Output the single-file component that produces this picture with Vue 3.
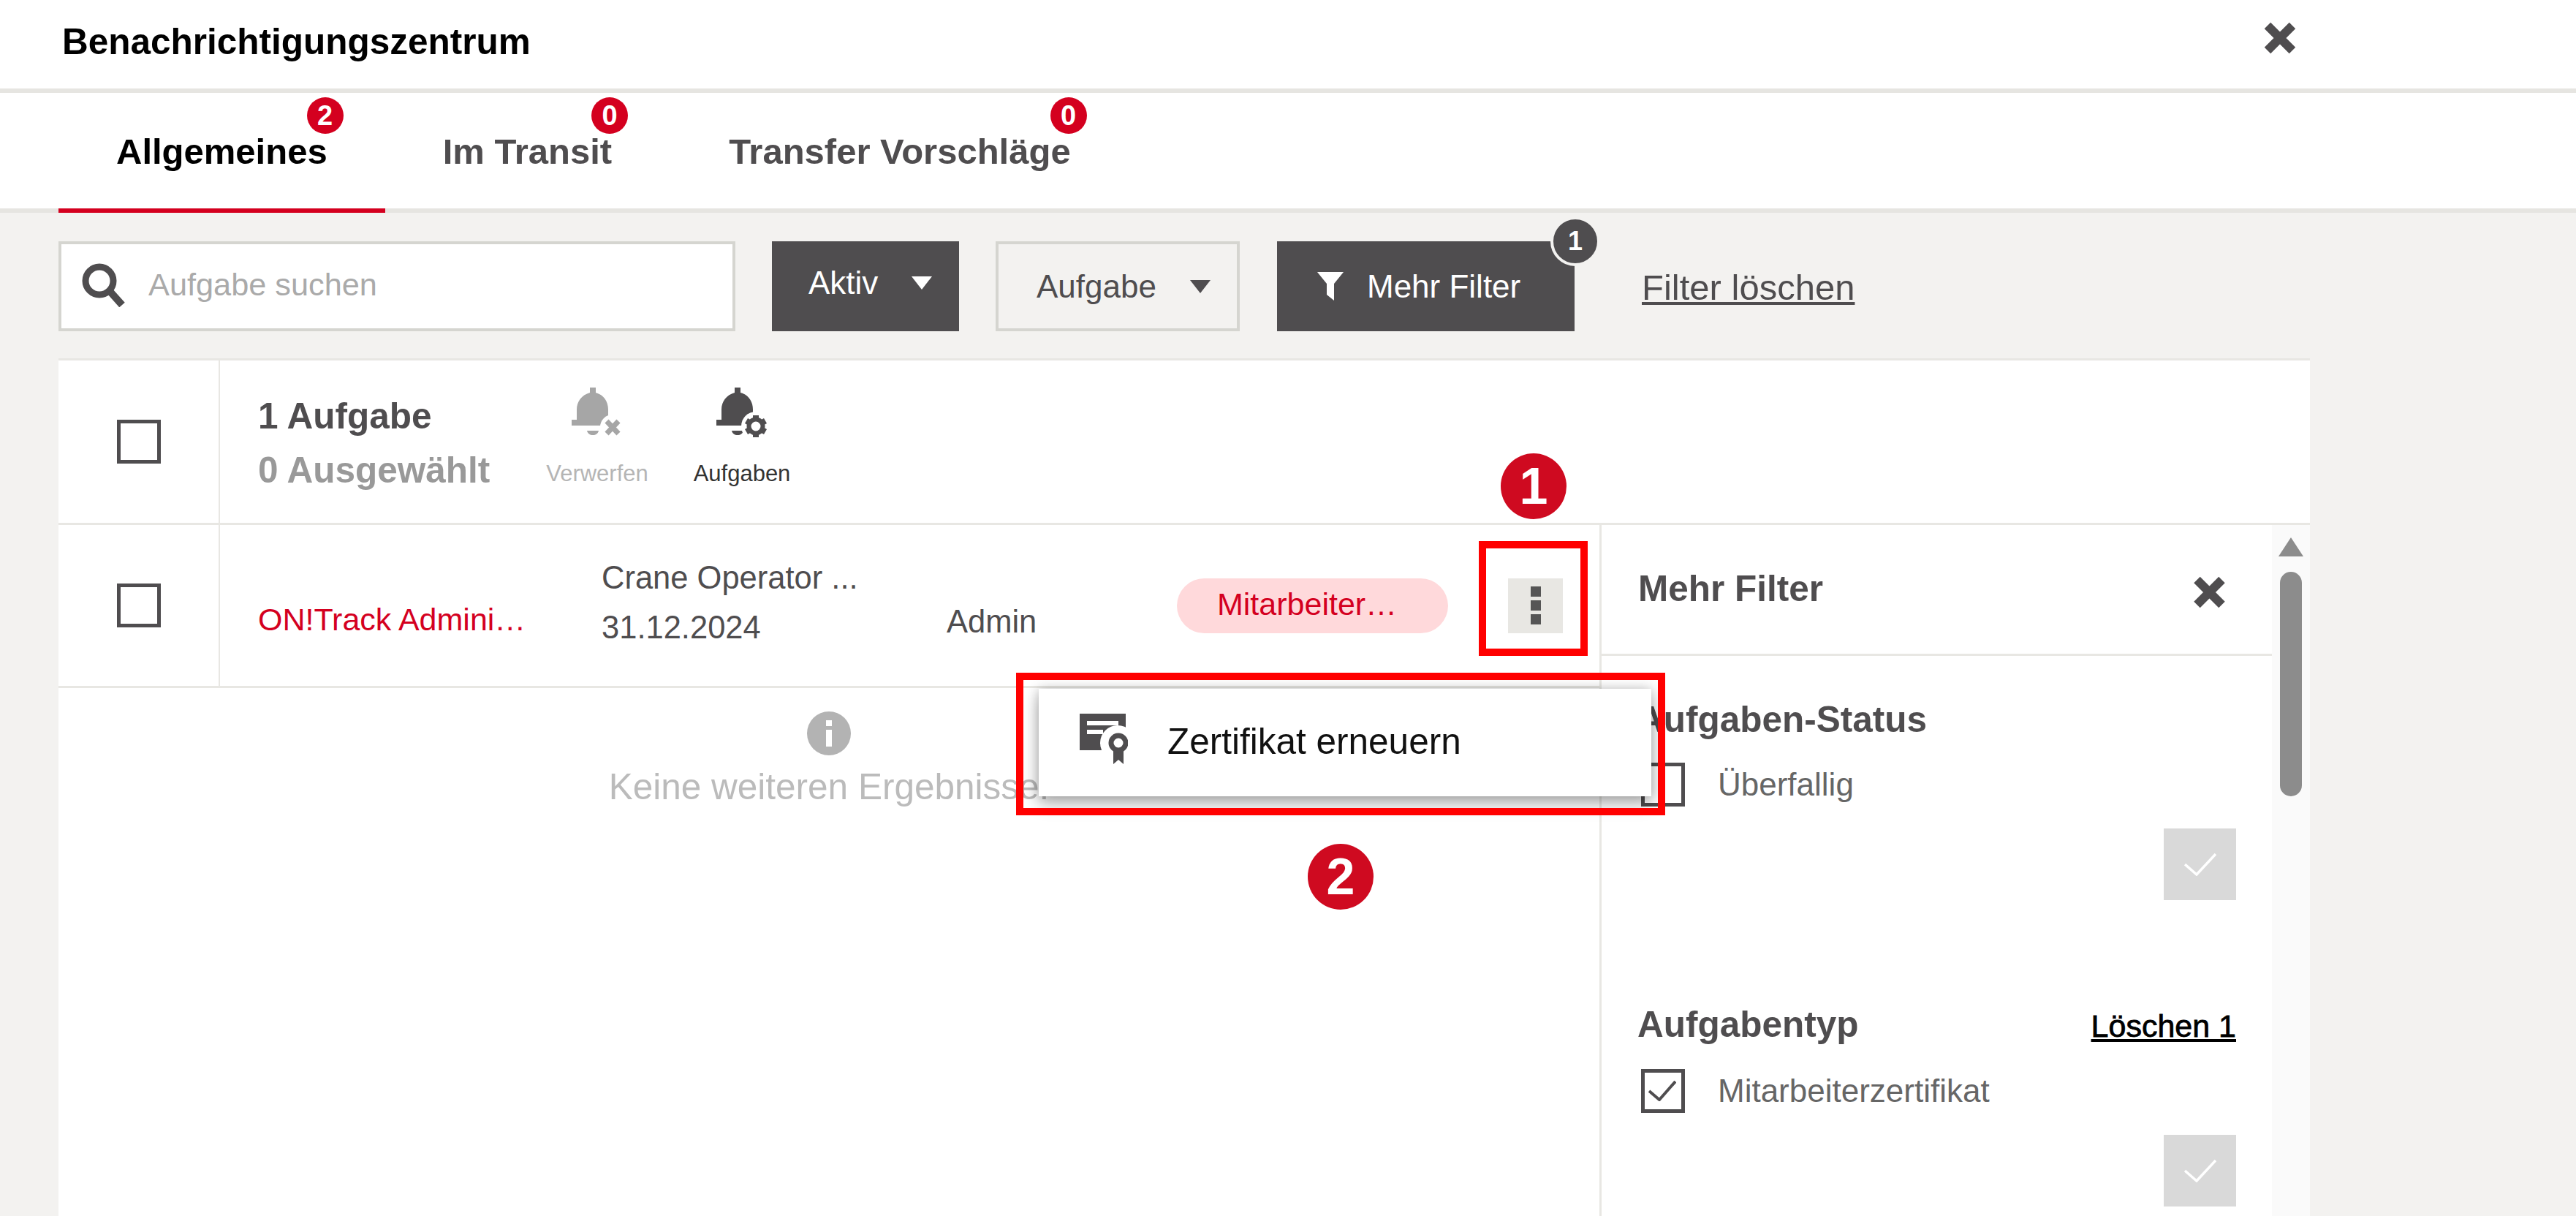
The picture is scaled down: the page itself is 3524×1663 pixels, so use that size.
<template>
  <div class="page">
    <!-- Titel -->
    <header class="titlebar">
      <span class="title">Benachrichtigungszentrum</span>
      <svg class="close-top" viewBox="0 0 44 44"><path d="M5 5l34 34M39 5L5 39" /></svg>
    </header>

    <!-- Tabs -->
    <nav class="tabs">
      <div v-for="tab in tabs" :key="tab.label" class="tab" :class="{ active: tab.active }">
        <span class="tab-label">
          {{ tab.label }}
          <span class="tab-badge">{{ tab.count }}</span>
        </span>
      </div>
    </nav>

    <!-- Filterleiste -->
    <section class="toolbar">
      <div class="search">
        <svg class="search-icon" viewBox="0 0 60 60">
          <circle cx="24" cy="24" r="19" />
          <path d="M38 38l17 19" />
        </svg>
        <span class="placeholder">Aufgabe suchen</span>
      </div>
      <button class="btn dark aktiv">
        Aktiv
        <svg class="caret" viewBox="0 0 28 18"><path d="M0 0h28L14 18z" /></svg>
      </button>
      <button class="btn outline aufgabe">
        Aufgabe
        <svg class="caret" viewBox="0 0 28 18"><path d="M0 0h28L14 18z" /></svg>
      </button>
      <button class="btn dark mehr">
        <svg class="funnel" viewBox="0 0 36 39"><path d="M0 0h36L23 16v23l-10-8V16z" /></svg>
        Mehr Filter
        <span class="more-badge">1</span>
      </button>
      <a class="clear-link">Filter löschen</a>
    </section>

    <!-- Liste -->
    <main class="card">
      <div class="list-head">
        <div class="check-cell"><span class="box"></span></div>
        <div class="count">
          <div class="count-total">1 Aufgabe</div>
          <div class="count-selected">0 Ausgewählt</div>
        </div>
        <div class="head-action muted">
          <svg viewBox="0 0 70 68" width="70" height="68">
            <g fill="#a6a6a6">
              <path d="M25 0h8v7c11 3 17 12 17 23v15H7V30C7 19 14 10 25 7z" />
              <path d="M0 44h48v8H0z" />
              <path d="M21 59h16c-1 4-4 6-8 6s-7-2-8-6z" />
            </g>
            <circle cx="56" cy="54" r="17" fill="#fff" />
            <path d="M48 46l16 17M64 46L48 63" stroke="#a6a6a6" stroke-width="7" fill="none" />
          </svg>
          <span>Verwerfen</span>
        </div>
        <div class="head-action">
          <svg viewBox="0 0 70 68" width="70" height="68">
            <g fill="#4f4d4f">
              <path d="M25 0h8v7c11 3 17 12 17 23v15H7V30C7 19 14 10 25 7z" />
              <path d="M0 44h48v8H0z" />
              <path d="M21 59h16c-1 4-4 6-8 6s-7-2-8-6z" />
            </g>
            <circle cx="54" cy="53" r="20" fill="#fff" />
            <g fill="#4f4d4f">
              <rect v-for="a in [0, 60, 120]" :key="a" x="50" y="38" width="8" height="30" :transform="`rotate(${a} 54 53)`" />
            </g>
            <circle cx="54" cy="53" r="9.5" fill="#fff" stroke="#4f4d4f" stroke-width="6" />
          </svg>
          <span>Aufgaben</span>
        </div>
      </div>

      <div class="body">
        <div class="results">
          <div class="row">
            <div class="check-cell"><span class="box"></span></div>
            <div class="cell name">ON!Track Admini…</div>
            <div class="cell asset">
              <div>Crane Operator ...</div>
              <div>31.12.2024</div>
            </div>
            <div class="cell owner">Admin</div>
            <div class="cell type"><span class="pill">Mitarbeiter…</span></div>
            <div class="kebab"><i></i><i></i><i></i></div>
          </div>
          <div class="empty">
            <svg class="info" viewBox="0 0 60 60">
              <circle cx="30" cy="30" r="30" fill="#b3b3b3" />
              <rect x="26" y="12" width="8" height="8" fill="#fff" />
              <rect x="26" y="25" width="8" height="23" fill="#fff" />
            </svg>
            <div class="empty-text">Keine weiteren Ergebnisse.</div>
          </div>
        </div>

        <aside class="filters">
          <div class="filters-main">
            <div class="filters-head">
              <span>Mehr Filter</span>
              <svg class="close-panel" viewBox="0 0 44 44"><path d="M5 5l34 34M39 5L5 39" /></svg>
            </div>
            <div v-for="group in filterGroups" :key="group.title" class="group">
              <div class="group-head">
                <span class="group-title">{{ group.title }}</span>
                <a v-if="group.clear" class="group-clear">{{ group.clear }}</a>
              </div>
              <div class="option">
                <span class="box small">
                  <svg v-if="group.checked" viewBox="0 0 38 28"><path d="M1 14l14 12L37 1" /></svg>
                </span>
                <span class="option-label">{{ group.option }}</span>
              </div>
              <div class="apply">
                <svg viewBox="0 0 44 31"><path d="M1 15l16 14L43 1" /></svg>
              </div>
            </div>
          </div>
          <div class="scrollbar">
            <svg class="scroll-arrow" viewBox="0 0 34 26"><path d="M17 0l17 26H0z" /></svg>
            <div class="scroll-thumb"></div>
          </div>
        </aside>
      </div>
    </main>

    <!-- Kontextmenü -->
    <div class="menu">
      <svg class="cert" viewBox="0 0 66 69">
        <path d="M0 0h63v50H0z" fill="#4f4d4f" />
        <path d="M10 10h43v6H10zM10 22h22v6H10z" fill="#fff" />
        <circle cx="52" cy="40" r="24" fill="#fff" />
        <path d="M46 48v21l7-6 7 6V48z" fill="#4f4d4f" />
        <circle cx="53" cy="40" r="10" fill="#fff" stroke="#4f4d4f" stroke-width="7" />
      </svg>
      <span>Zertifikat erneuern</span>
    </div>

    <!-- Markierungen -->
    <div class="mark box-one"></div>
    <div class="mark box-two"></div>
    <div class="step step-one">1</div>
    <div class="step step-two">2</div>
  </div>
</template>

<script setup>
const tabs = [
  { label: 'Allgemeines', count: 2, active: true },
  { label: 'Im Transit', count: 0 },
  { label: 'Transfer Vorschläge', count: 0 },
]

const filterGroups = [
  { title: 'Aufgaben-Status', option: 'Überfallig', checked: false },
  { title: 'Aufgabentyp', option: 'Mitarbeiterzertifikat', checked: true, clear: 'Löschen 1' },
]
</script>

<style>
html,
body {
  margin: 0;
  background: #fff;
}
</style>

<style scoped>
.page {
  position: relative;
  width: 3524px;
  height: 1663px;
  overflow: hidden;
  display: flex;
  flex-direction: column;
  background: #f3f2f0;
  color: #4f4d4f;
  font-family: "Liberation Sans", Arial, sans-serif;
}

.titlebar {
  flex: none;
  height: 121px;
  box-sizing: content-box;
  border-bottom: 6px solid #e6e5e1;
  background: #fff;
  display: flex;
  align-items: center;
  justify-content: space-between;
  padding: 0 383px 0 85px;
}

.title {
  font-size: 49.5px;
  font-weight: 700;
  color: #000;
  margin-top: -9px;
}

.close-top {
  width: 44px;
  height: 44px;
  margin-top: -18px;
}

.close-top path,
.close-panel path {
  stroke: #4f4d4f;
  stroke-width: 12;
  fill: none;
}

.tabs {
  flex: none;
  height: 158px;
  border-bottom: 6px solid #e6e5e1;
  background: #fff;
  display: flex;
  padding-left: 80px;
}

.tab {
  height: 164px;
  box-sizing: border-box;
  padding: 52px 79px 0;
  font-size: 49px;
  font-weight: 700;
  line-height: 56px;
  white-space: nowrap;
}

.tab + .tab + .tab {
  padding-left: 81px;
}

.tab.active {
  color: #000;
  border-bottom: 6px solid #d4001f;
}

.tab-label {
  position: relative;
  display: block;
}

.tab-badge {
  position: absolute;
  top: -46px;
  right: -22px;
  width: 50px;
  height: 50px;
  border-radius: 50%;
  background: #d4001f;
  color: #fff;
  font-size: 38px;
  line-height: 50px;
  text-align: center;
}

.toolbar {
  flex: none;
  height: 199px;
  box-sizing: border-box;
  padding: 39px 0 0 80px;
  display: flex;
  align-items: flex-start;
}

.search {
  width: 926px;
  height: 123px;
  box-sizing: border-box;
  border: 4px solid #d5d5d0;
  background: #fff;
  display: flex;
  align-items: center;
  padding: 0 0 4px 28px;
}

.search-icon {
  width: 60px;
  height: 60px;
  flex: none;
}

.search-icon circle {
  fill: none;
  stroke: #4f4d4f;
  stroke-width: 9;
}

.search-icon path {
  fill: none;
  stroke: #4f4d4f;
  stroke-width: 10;
}

.placeholder {
  margin-left: 31px;
  font-size: 43.3px;
  color: #aaa;
}

.btn {
  height: 123px;
  box-sizing: border-box;
  border: 0;
  padding: 0;
  display: flex;
  align-items: center;
  font-family: inherit;
  font-size: 44px;
}

.btn.dark {
  background: #4f4d4f;
  color: #fff;
}

.btn.outline {
  background: transparent;
  border: 4px solid #d5d5d0;
  color: #4f4d4f;
}

.caret {
  width: 28px;
  height: 18px;
  fill: currentColor;
}

.aktiv {
  width: 256px;
  margin-left: 50px;
  padding: 0 0 10px 50px;
}

.aktiv .caret {
  margin-left: 46px;
}

.aufgabe {
  width: 334px;
  margin-left: 50px;
  padding: 0 0 0 52px;
}

.aufgabe .caret {
  margin-left: 46px;
}

.mehr {
  position: relative;
  width: 407px;
  margin-left: 51px;
  padding: 0 0 0 55px;
}

.funnel {
  width: 36px;
  height: 39px;
  fill: #fff;
  margin-right: 32px;
}

.more-badge {
  position: absolute;
  top: -34px;
  right: -35px;
  width: 68px;
  height: 68px;
  box-sizing: border-box;
  border: 4px solid #f3f2f0;
  border-radius: 50%;
  background: #4f4d4f;
  color: #fff;
  font-size: 36px;
  font-weight: 700;
  line-height: 60px;
  text-align: center;
}

.clear-link {
  margin: 35px 0 0 92px;
  font-size: 49px;
  text-decoration: underline;
}

.card {
  flex: 1;
  min-height: 0;
  margin: 0 364px 0 80px;
  background: #fff;
  border-top: 3px solid #e8e7e3;
  display: flex;
  flex-direction: column;
}

.list-head {
  flex: none;
  height: 225px;
  box-sizing: border-box;
  border-bottom: 3px solid #e8e7e3;
  display: flex;
}

.check-cell {
  flex: none;
  align-self: stretch;
  width: 221px;
  box-sizing: border-box;
  border-right: 2px solid #e8e7e3;
  display: flex;
  align-items: center;
  justify-content: center;
}

.box {
  display: block;
  flex: none;
  width: 60px;
  height: 60px;
  box-sizing: border-box;
  border: 5px solid #4f4d4f;
}

.count {
  width: 446px;
  padding: 39px 0 0 52px;
  box-sizing: border-box;
  font-size: 49.5px;
  font-weight: 700;
  line-height: 74px;
}

.count-selected {
  color: #999;
}

.head-action {
  width: 200px;
  padding-top: 37px;
  display: flex;
  flex-direction: column;
  align-items: center;
  font-size: 31px;
  color: #333;
  margin-left: -30px;
  margin-right: 28px;
}

.head-action span {
  margin-top: 32px;
}

.head-action.muted {
  color: #b5b5b5;
}

.body {
  flex: 1;
  min-height: 0;
  display: flex;
}

.results {
  flex: none;
  width: 2108px;
}

.row {
  height: 223px;
  box-sizing: border-box;
  border-bottom: 3px solid #e8e7e3;
  display: flex;
  align-items: center;
}

.cell {
  flex: none;
  box-sizing: border-box;
  font-size: 43.5px;
  white-space: nowrap;
}

.name {
  width: 522px;
  padding: 38px 0 0 52px;
  font-size: 43px;
  color: #d4001f;
}

.asset {
  width: 472px;
  line-height: 68px;
  padding-bottom: 8px;
}

.owner {
  width: 315px;
  padding-top: 44px;
}

.type {
  width: 453px;
}

.pill {
  display: inline-block;
  width: 371px;
  height: 75px;
  box-sizing: border-box;
  padding-left: 55px;
  border-radius: 38px;
  background: #ffd9db;
  color: #d4001f;
  font-size: 43px;
  line-height: 70px;
}

.kebab {
  width: 75px;
  height: 75px;
  background: #e8e7e3;
  display: flex;
  flex-direction: column;
  align-items: center;
  justify-content: center;
  gap: 5px;
}

.kebab i {
  display: block;
  width: 14px;
  height: 14px;
  background: #555;
}

.empty {
  padding-top: 32px;
  display: flex;
  flex-direction: column;
  align-items: center;
}

.info {
  width: 60px;
  height: 60px;
}

.empty-text {
  margin-top: 14px;
  font-size: 49.5px;
  color: #bbb;
  white-space: nowrap;
}

.filters {
  flex: 1;
  min-width: 0;
  border-left: 3px solid #e8e7e3;
  display: flex;
}

.filters-main {
  flex: 1;
  min-width: 0;
}

.filters-head {
  height: 176px;
  border-bottom: 3px solid #e8e7e3;
  padding: 0 63px 0 50px;
  display: flex;
  align-items: center;
  justify-content: space-between;
  font-size: 49.5px;
  font-weight: 700;
}

.filters-head span {
  margin-bottom: 4px;
}

.close-panel {
  width: 45px;
  height: 44px;
  margin-top: 8px;
}

.group {
  padding: 59px 49px 0 49px;
}

.group + .group {
  padding-top: 142px;
}

.group-head {
  display: flex;
  align-items: baseline;
  justify-content: space-between;
  line-height: 56px;
}

.group-title {
  font-size: 49.5px;
  font-weight: 700;
}

.group-clear {
  font-size: 43px;
  color: #000;
  text-decoration: underline;
  -webkit-text-stroke: 0.8px #000;
}

.option {
  margin-top: 31px;
  padding-left: 5px;
  display: flex;
  align-items: center;
  gap: 45px;
}

.box.small svg {
  display: block;
  width: 38px;
  height: 28px;
  margin: 11px 0 0 5px;
  fill: none;
  stroke: #4f4d4f;
  stroke-width: 4;
}

.option-label {
  font-size: 44px;
  color: #666;
}

.apply {
  width: 99px;
  height: 98px;
  margin: 30px 0 0 auto;
  background: #d9d9d9;
  display: flex;
  align-items: center;
  justify-content: center;
}

.apply svg {
  width: 44px;
  height: 31px;
  fill: none;
  stroke: #fff;
  stroke-width: 3.5;
}

.scrollbar {
  flex: none;
  width: 52px;
  background: #fafafa;
  display: flex;
  flex-direction: column;
  align-items: center;
  padding-top: 17px;
}

.scroll-arrow {
  width: 34px;
  height: 26px;
  fill: #8c8c8c;
}

.scroll-thumb {
  width: 30px;
  height: 307px;
  margin-top: 21px;
  border-radius: 15px;
  background: #8c8c8c;
}

.menu {
  position: absolute;
  left: 1421px;
  top: 942px;
  width: 838px;
  height: 147px;
  background: #fff;
  box-shadow: 0 10px 22px rgba(0, 0, 0, 0.3), 0 0 14px rgba(0, 0, 0, 0.18);
  display: flex;
  align-items: center;
  padding: 0 0 4px 56px;
  box-sizing: border-box;
  font-size: 49.5px;
  color: #111;
}

.cert {
  width: 66px;
  height: 69px;
  margin-right: 54px;
  margin-bottom: 7px;
}

.mark {
  position: absolute;
  box-sizing: border-box;
  border: 10px solid #f00;
}

.box-one {
  left: 2023px;
  top: 740px;
  width: 149px;
  height: 157px;
}

.box-two {
  left: 1390px;
  top: 920px;
  width: 888px;
  height: 195px;
}

.step {
  position: absolute;
  width: 90px;
  height: 90px;
  border-radius: 50%;
  background: #cf0a20;
  color: #fff;
  font-size: 70px;
  font-weight: 700;
  line-height: 90px;
  text-align: center;
}

.step-one {
  left: 2053px;
  top: 620px;
}

.step-two {
  left: 1789px;
  top: 1154px;
}
</style>
